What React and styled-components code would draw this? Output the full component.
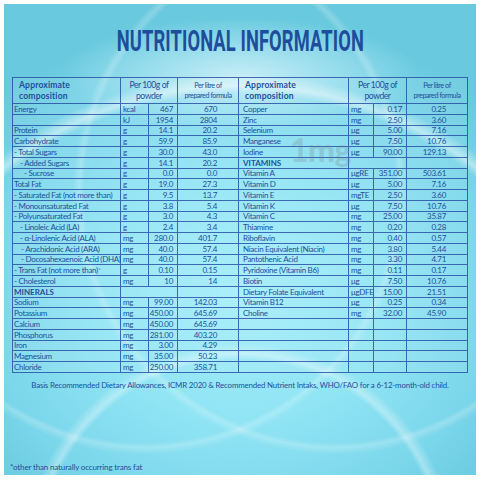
import React from "react";
import styled, { createGlobalStyle } from "styled-components";

const Global = createGlobalStyle`
  html, body { margin: 0; padding: 0; background: #ffffff; }
  body { font-family: Lato, "Liberation Sans", Arial, sans-serif; }
  #root { width: 480px; height: 480px; }
`;

const Frame = styled.div`
  width: 480px;
  height: 480px;
  box-sizing: border-box;
  padding: 4px 4px 5px 4px;
  background: #fff;
`;

const Panel = styled.div`
  width: 100%;
  height: 100%;
  display: flex;
  flex-direction: column;
  box-sizing: border-box;
  overflow: hidden;
  background:
    radial-gradient(ellipse 38% 12% at 50% 15%, rgba(255,255,255,0.55), rgba(255,255,255,0) 100%),
    radial-gradient(circle at 50% 98%, rgba(255,255,255,0) 0 372px, rgba(255,255,255,0.45) 380px, rgba(255,255,255,0) 392px),
    radial-gradient(circle at 50% 118%, rgba(255,255,255,0) 0 200px, rgba(255,255,255,0.35) 206px, rgba(255,255,255,0) 216px),
    radial-gradient(circle at 30% 40%, rgba(255,255,255,0) 0 250px, rgba(255,255,255,0.22) 255px, rgba(255,255,255,0) 262px),
    radial-gradient(circle at 70% 40%, rgba(255,255,255,0) 0 250px, rgba(255,255,255,0.22) 255px, rgba(255,255,255,0) 262px),
    radial-gradient(ellipse 70% 60% at 50% 62%, #a4eefa 0%, #90e4f4 45%, #7ad6ea 78%, #69c9de 100%);
`;

const TitleBar = styled.div`
  height: 73px;
  display: flex;
  align-items: center;
  justify-content: center;
  padding-top: 3px;
  box-sizing: border-box;
`;

const Title = styled.h1`
  margin: 0;
  display: inline-block;
  font-family: Roboto, "Liberation Sans", sans-serif;
  font-weight: 700;
  font-size: 29.5px;
  line-height: 1;
  color: #1d4d9c;
  transform: scaleX(0.62);
  white-space: nowrap;
  letter-spacing: 0.2px;
`;

const TableWrap = styled.div`
  position: relative;
  margin: 0 8px;
`;

const Grid = styled.div`
  display: grid;
  grid-template-columns: 108px 28px 29px 61px 110px 25px 33px 61px;
  grid-template-rows: 26px repeat(25, 10.76px);
  border-top: 1px solid rgba(32, 72, 160, 0.8);
  border-left: 1px solid rgba(32, 72, 160, 0.8);
  background: rgba(255, 255, 255, 0.08);
  color: #1f4f9c;
`;

const Cell = styled.div`
  box-sizing: border-box;
  border-right: 1px solid rgba(32, 72, 160, 0.8);
  border-bottom: 1px solid rgba(32, 72, 160, 0.8);
  display: flex;
  align-items: center;
  justify-content: ${(p) => (p.$align === "right" ? "flex-end" : p.$align === "center" ? "center" : "flex-start")};
  padding-left: ${(p) => p.$pl || 0}px;
  padding-right: ${(p) => p.$pr || 0}px;
  grid-column: ${(p) => (p.$span ? `span ${p.$span}` : "auto")};
  font-size: 8px;
  line-height: 1;
  white-space: nowrap;
  font-weight: ${(p) => (p.$bold ? 700 : 400)};
  letter-spacing: ${(p) => (p.$bold ? "0" : "-0.3px")};
  overflow: visible;
`;

const HeadName = styled(Cell)`
  font-size: 8.6px;
  font-weight: 700;
  line-height: 11px;
  white-space: normal;
  padding-left: 6px;
  padding-top: 1px;
  letter-spacing: 0.15px;
`;

const HeadCol = styled(Cell)`
  justify-content: center;
  text-align: center;
  white-space: normal;
  font-size: ${(p) => (p.$small ? 7.2 : 8.6)}px;
  line-height: ${(p) => (p.$small ? 10 : 11)}px;
  letter-spacing: -0.45px;
  padding-top: 1px;
`;

const Sup = styled.sup`
  font-size: 5px;
  vertical-align: top;
  line-height: 1;
  margin-left: 0.5px;
`;

const Watermark = styled.div`
  position: absolute;
  left: 278px;
  top: 57px;
  font-family: Lato, sans-serif;
  font-weight: 900;
  font-size: 32px;
  line-height: 1;
  color: rgba(120, 128, 136, 0.25);
  pointer-events: none;
  letter-spacing: -0.5px;
`;

const Basis = styled.p`
  margin: 7px 0 0 0;
  text-align: center;
  font-size: 7.9px;
  line-height: 10px;
  color: #1f4f9c;
  letter-spacing: -0.18px;
`;

const Spacer = styled.div`
  flex: 1;
`;

const Foot = styled.p`
  margin: 0 0 3px 6px;
  font-size: 8px;
  line-height: 10px;
  color: #1f4f9c;
  letter-spacing: -0.15px;
`;

const left = [
  ["Energy", 0, "kcal", "467", "670"],
  ["", 0, "kJ", "1954", "2804"],
  ["Protein", 0, "g", "14.1", "20.2"],
  ["Carbohydrate", 0, "g", "59.9", "85.9"],
  ["- Total Sugars", 0, "g", "30.0", "43.0"],
  ["- Added Sugars", 6, "g", "14.1", "20.2"],
  ["- Sucrose", 10, "g", "0.0", "0.0"],
  ["Total Fat", 0, "g", "19.0", "27.3"],
  ["- Saturated Fat (not more than)", 0, "g", "9.5", "13.7"],
  ["- Monounsaturated Fat", 0, "g", "3.8", "5.4"],
  ["- Polyunsaturated Fat", 0, "g", "3.0", "4.3"],
  ["- Linoleic Acid (LA)", 6, "g", "2.4", "3.4"],
  ["- α-Linolenic Acid (ALA)", 6, "mg", "280.0", "401.7"],
  ["- Arachidonic Acid (ARA)", 7, "mg", "40.0", "57.4"],
  ["- Docosahexaenoic Acid (DHA)", 7, "mg", "40.0", "57.4"],
  ["- Trans Fat (not more than)", 0, "g", "0.10", "0.15", true],
  ["- Cholesterol", 0, "mg", "10", "14"],
  ["MINERALS", "section"],
  ["Sodium", 0, "mg", "99.00", "142.03"],
  ["Potassium", 0, "mg", "450.00", "645.69"],
  ["Calcium", 0, "mg", "450.00", "645.69"],
  ["Phosphorus", 0, "mg", "281.00", "403.20"],
  ["Iron", 0, "mg", "3.00", "4.29"],
  ["Magnesium", 0, "mg", "35.00", "50.23"],
  ["Chloride", 0, "mg", "250.00", "358.71"],
];

const right = [
  ["Copper", 0, "mg", "0.17", "0.25"],
  ["Zinc", 0, "mg", "2.50", "3.60"],
  ["Selenium", 0, "μg", "5.00", "7.16"],
  ["Manganese", 0, "μg", "7.50", "10.76"],
  ["Iodine", 0, "μg", "90.00", "129.13"],
  ["VITAMINS", "section"],
  ["Vitamin A", 0, "μgRE", "351.00", "503.61"],
  ["Vitamin D", 0, "μg", "5.00", "7.16"],
  ["Vitamin E", 0, "mgTE", "2.50", "3.60"],
  ["Vitamin K", 0, "μg", "7.50", "10.76"],
  ["Vitamin C", 0, "mg", "25.00", "35.87"],
  ["Thiamine", 0, "mg", "0.20", "0.28"],
  ["Riboflavin", 0, "mg", "0.40", "0.57"],
  ["Niacin Equivalent (Niacin)", 0, "mg", "3.80", "5.44"],
  ["Pantothenic Acid", 0, "mg", "3.30", "4.71"],
  ["Pyridoxine (Vitamin B6)", 0, "mg", "0.11", "0.17"],
  ["Biotin", 0, "μg", "7.50", "10.76"],
  ["Dietary Folate Equivalent", 0, "μgDFE", "15.00", "21.51"],
  ["Vitamin B12", 0, "μg", "0.25", "0.34"],
  ["Choline", 0, "mg", "32.00", "45.90"],
  ["", 0, "", "", ""],
  ["", 0, "", "", ""],
  ["", 0, "", "", ""],
  ["", 0, "", "", ""],
  ["", 0, "", "", ""],
];

function Half({ row, base, unitPl }) {
  if (row[1] === "section") {
    return (
      <>
        <Cell $pl={base} $bold>{row[0]}</Cell>
        <Cell $span={2} />
        <Cell />
      </>
    );
  }
  const [name, indent, unit, val, litre, star] = row;
  return (
    <>
      <Cell $pl={base + indent}>
        {name}
        {star && <Sup>*</Sup>}
      </Cell>
      <Cell $pl={unitPl}>{unit}</Cell>
      <Cell $align="right" $pr={4}>{val}</Cell>
      <Cell $align="right" $pr={21}>{litre}</Cell>
    </>
  );
}

export default function App() {
  return (
    <>
      <Global />
      <Frame>
        <Panel>
          <TitleBar>
            <Title>NUTRITIONAL INFORMATION</Title>
          </TitleBar>
          <TableWrap>
            <Grid>
              <HeadName>Approximate<br />composition</HeadName>
              <HeadCol $span={2}>Per 100g of<br />powder</HeadCol>
              <HeadCol $small>Per litre of<br />prepared formula</HeadCol>
              <HeadName>Approximate<br />composition</HeadName>
              <HeadCol $span={2}>Per 100g of<br />powder</HeadCol>
              <HeadCol $small>Per litre of<br />prepared formula</HeadCol>
              {left.map((l, i) => (
                <React.Fragment key={i}>
                  <Half row={l} base={1} unitPl={2} />
                  <Half row={right[i]} base={4} unitPl={2} />
                </React.Fragment>
              ))}
            </Grid>
            <Watermark>1mg</Watermark>
          </TableWrap>
          <Basis>
            Basis Recommended Dietary Allowances, ICMR 2020 &amp; Recommended Nutrient Intaks, WHO/FAO for a 6-12-month-old child.
          </Basis>
          <Spacer />
          <Foot>*other than naturally occurring trans fat</Foot>
        </Panel>
      </Frame>
    </>
  );
}
